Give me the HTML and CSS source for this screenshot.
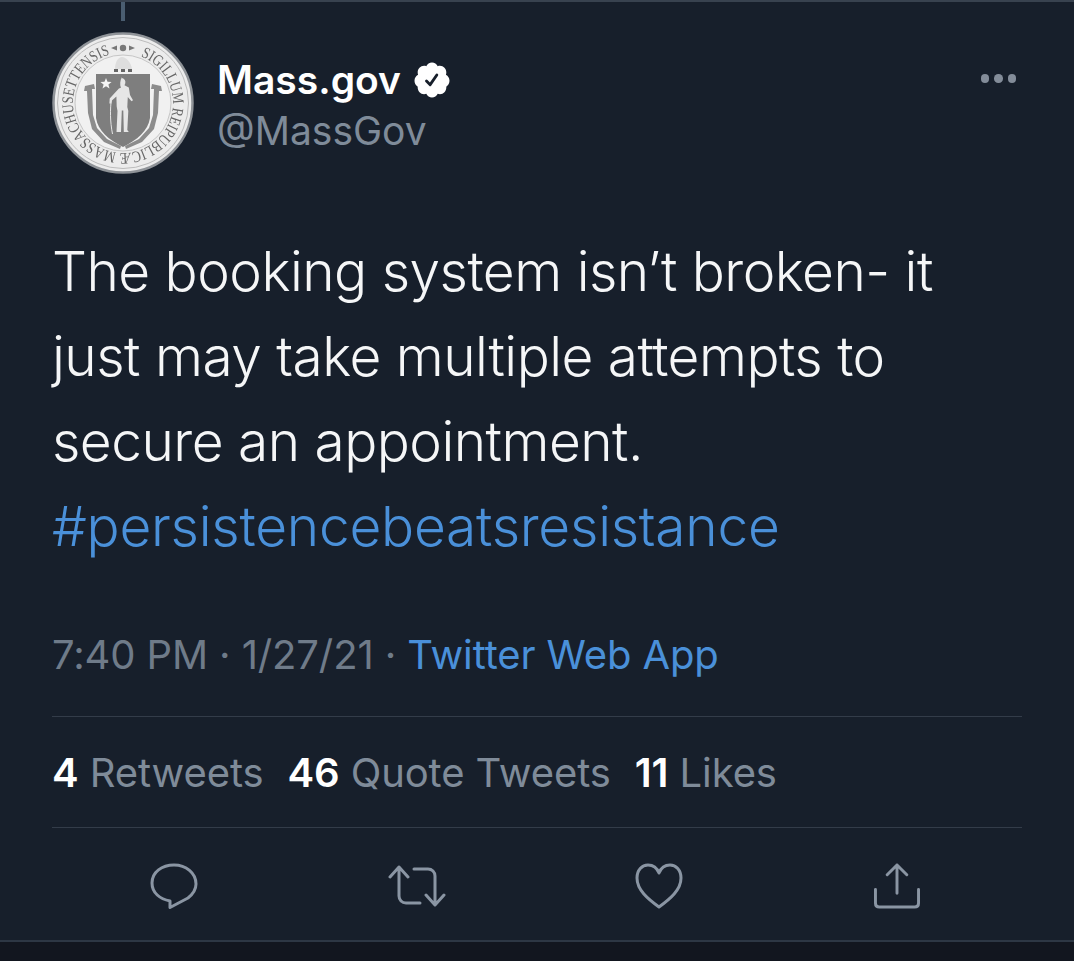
FILE: index.html
```html
<!DOCTYPE html>
<html lang="en">
<head>
<meta charset="utf-8">
<title>Mass.gov tweet</title>
<link rel="stylesheet" href="styles.css">
</head>
<body>
<main class="tweet">
  <div class="thread"></div>
  <header class="head">
    <svg class="seal" viewBox="0 0 142 142" role="img" aria-label="Seal of Massachusetts">
      <circle cx="71" cy="71" r="69.500" fill="#ececec" stroke="#8f9398" stroke-width="2.500"/>
      <circle cx="71" cy="71" r="65.500" fill="none" stroke="#bcbcbc" stroke-width="1"/>
      <circle cx="71" cy="71" r="48" fill="#f1f1f1" stroke="#c6c6c6" stroke-width="1"/>
      <defs>
        <path id="ring" d="M 88.900 24.300 A 50 50 0 1 1 57.200 22.900"/>
      </defs>
      <text class="seal-text"><textPath href="#ring" textLength="282" lengthAdjust="spacingAndGlyphs">SIGILLUM REIPUBLICÆ MASSACHUSETTENSIS</textPath></text>
      <path class="ornament" d="M59 16l6-2.500v5zM83 16l-6-2.500v5z"/>
      <circle class="ornament" cx="71" cy="16" r="3.200"/>
      <path class="crest" d="M63 37c0-7 3-12 7-12s9 5 10 12z"/>
      <path class="crest-dots" d="M62 37h4v3h-4zM69 37h4v3h-4zM76 37h4v3h-4z"/>
      <path class="ribbon" d="M33 54l9-2 1 5-3 0 1 26 4 13 10 11 14 7-1 3-16-7-12-13-4-16-1-22-3 0zM109 54l-9-2-1 5 3 0-1 26-4 13-10 11-14 7 1 3 16-7 12-13 4-16 1-22 3 0z"/>
      <path class="shield" d="M44 42h54v44c-2 13-13 22-27 29-14-7-25-16-27-29z"/>
      <path class="star" d="M54 46l1.500 3.800 4.100.2-3.200 2.600 1.100 4-3.500-2.300-3.500 2.300 1.100-4-3.200-2.600 4.100-.2z"/>
      <path class="figure" d="M70 46c2.600.5 3.800 2.800 3.300 5.200l-.8 2 4.300 2.300 1.200 7.500 3 5.300-1.500 1-3.700-4.200-.5 10 1 4-1 19 1.500 2h-5l-.5-21.500h-1.500l-.8 21.500h-4.500l1-21-.8-4.500-.3-10-4.500 4-.5 3h-2l.3-5 6.200-6.800 3-3.300 2-.7c-1.300-3-.8-7.800 1.100-10.800z"/>
      <path class="bow" d="M59.500 66c-1.500 12-1.500 23 1 36"/>
    </svg>
    <div class="who">
      <div class="name-row">
        <span class="name">Mass.gov</span>
        <svg class="badge" viewBox="0 0 24 24" aria-label="Verified">
          <path fill="#fff" d="M22.500 12.500c0-1.580-.875-2.950-2.148-3.600.154-.435.238-.905.238-1.400 0-2.210-1.710-3.998-3.818-3.998-.47 0-.92.084-1.336.25C14.818 2.415 13.510 1.500 12 1.500s-2.816.917-3.437 2.250c-.415-.165-.866-.25-1.336-.25-2.110 0-3.818 1.790-3.818 4 0 .494.083.964.237 1.400-1.272.65-2.147 2.018-2.147 3.600 0 1.495.782 2.798 1.942 3.486-.02.17-.032.34-.032.514 0 2.210 1.708 4 3.818 4 .47 0 .92-.086 1.335-.25.62 1.334 1.926 2.250 3.437 2.250 1.512 0 2.818-.916 3.437-2.250.415.163.865.248 1.336.248 2.110 0 3.818-1.790 3.818-4 0-.174-.012-.344-.033-.513 1.158-.687 1.943-1.990 1.943-3.484z"/>
          <path fill="none" stroke="#171f2b" stroke-width="1.700" stroke-linecap="round" stroke-linejoin="round" d="M8.700 12.600l2.200 2.200 4-5.800"/>
        </svg>
      </div>
      <div class="handle">@MassGov</div>
    </div>
    <div class="more" aria-label="More"><i></i><i></i><i></i></div>
  </header>
  <p class="body">The booking system isn’t broken- it<br>just may take multiple attempts to<br>secure an appointment.<br><a class="link tag" href="#">#persistencebeatsresistance</a></p>
  <p class="meta">7:40 PM · 1/27/21 · <a class="link" href="#">Twitter Web App</a></p>
  <div class="stats">
    <span><b>4</b> Retweets</span>
    <span><b>46</b> Quote Tweets</span>
    <span><b>11</b> Likes</span>
  </div>
  <nav class="actions">
    <svg class="icon icon-reply" viewBox="0 0 48 46"><path d="M24 2c12 0 22 8 22 19 0 6-3 10-8 14L20 44.500V38C10 36 2 30 2 20 2 9 12 2 24 2z"/></svg>
    <svg class="icon icon-rt" viewBox="0 0 58 42"><path d="M11 2L2 12M11 2l9 10M11 3v28c0 4 3 7 7 7h14M47 40l-9-10M47 40l9-10M47 39V11c0-4-3-7-7-7H26"/></svg>
    <svg class="icon icon-like" viewBox="0 0 48 46"><path d="M24 44C13 36 2 27 2 15 2 7 7 2 13 2c5 0 9 3 11 8 2-5 6-8 11-8 6 0 11 5 11 13 0 12-11 21-22 29z"/></svg>
    <svg class="icon icon-share" viewBox="0 0 48 47"><path d="M24 31V2M14 12L24 2l10 10M2 27v14c0 3 2 4 4 4h36c2 0 4-1 4-4V27"/></svg>
  </nav>
</main>
<div class="foot"></div>
</body>
</html>
```
FILE: styles.css
```css
* { box-sizing: border-box; }
html, body { margin: 0; padding: 0; background: #171f2b; }
body { width: 1074px; height: 961px; overflow: hidden; font-family: Inter, "Liberation Sans", sans-serif; color: #fff; }
.tweet { height: 942px; padding: 0 52px; border-top: 2px solid #38424f; border-bottom: 2px solid #2d3744; position: relative; }
.thread { width: 4px; height: 19px; margin-left: 69px; background: #4a5d70; }
.head { display: flex; align-items: flex-start; margin-top: 11px; height: 142px; }
.seal { width: 142px; height: 142px; flex: none; filter: blur(.5px); }
.seal-text { font: 16px "Liberation Serif", serif; fill: #666; }
.ornament { fill: #777; }
.crest { fill: #dedede; }
.crest-dots { fill: #666; }
.ribbon { fill: #8c8c8c; }
.shield { fill: #7e7e7e; }
.star { fill: #f4f4f4; }
.figure { fill: #e6e6e6; }
.bow { fill: none; stroke: #e6e6e6; stroke-width: 1; }
.who { margin-left: 23px; padding-top: 25px; flex: 1; }
.name-row { display: flex; align-items: center; gap: 11px; height: 46px; }
.name { font-size: 39px; font-weight: 600; line-height: 46px; }
.badge { width: 40px; height: 40px; }
.handle { font-size: 39px; line-height: 46px; color: #7f8b99; margin-top: 5px; }
.more { display: flex; gap: 5px; padding: 42px 6px 0 0; }
.more i { width: 8.500px; height: 8.500px; border-radius: 50%; background: #838c99; }
.body { margin: 55px 0 0; font-size: 55px; line-height: 85px; letter-spacing: -.52px; font-weight: 350; color: #f5f6f7; white-space: nowrap; }
.link { color: #4a90d9; text-decoration: none; }
.tag { letter-spacing: -.25px; }
.meta { margin: 62px 0 0; height: 48px; font-size: 40px; line-height: 48px; letter-spacing: -.12px; color: #6f7b89; white-space: nowrap; }
.stats { margin-top: 37px; height: 112px; border-top: 1px solid #333c49; border-bottom: 1px solid #333c49; display: flex; align-items: center; gap: 24px; font-size: 40px; letter-spacing: -.1px; color: #7f8b99; white-space: nowrap; }
.stats b { color: #fff; font-weight: 600; }
.actions { display: flex; justify-content: space-between; align-items: center; padding: 35px 101px 0 98px; }
.icon { fill: none; stroke: #8a95a3; stroke-width: 3; stroke-linecap: round; stroke-linejoin: round; height: 46px; width: 48px; }
.icon-rt { width: 58px; height: 42px; }
.foot { height: 19px; background: #12161f; }
```
